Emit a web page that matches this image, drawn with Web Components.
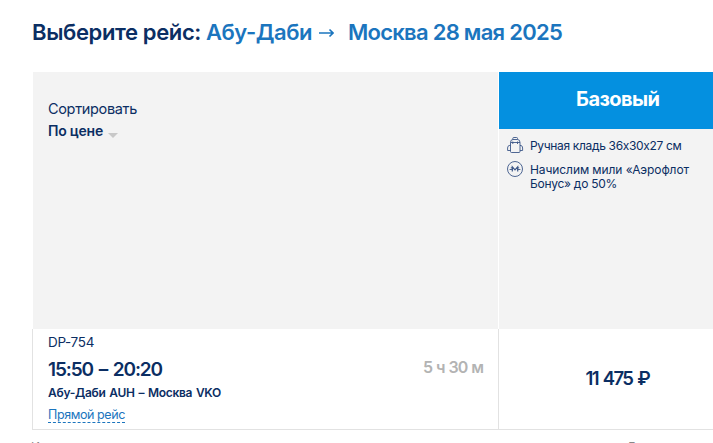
<!DOCTYPE html>
<html lang="ru">
<head>
<meta charset="utf-8">
<title>Выберите рейс</title>
<style>
html,body{margin:0;height:443px;overflow:hidden;background:#fff}
body{font-family:Inter,"Noto Sans",sans-serif;color:#0b2e63}
</style>
</head>
<body>
<flight-page></flight-page>
<script>
// A single line of text whose tracking is adjusted to fill a given width.
class FitText extends HTMLElement{
  connectedCallback(){
    const root=this.attachShadow({mode:'open'});
    root.innerHTML='<style>:host{display:block;white-space:pre;flex:none}span{display:inline-block}</style><span><slot></slot></span>';
    const span=root.querySelector('span');
    const goal=+this.getAttribute('w'), n=this.textContent.length;
    this.style.width=goal+'px';
    const now=span.getBoundingClientRect().width;
    span.style.letterSpacing=((goal-now)/n).toFixed(3)+'px';
  }
}
class FareIcon extends HTMLElement{
  connectedCallback(){
    const bag='<path d="M3.5 14.5V5.5Q3.5 2.5 6 2.5H10.5Q13 2.5 13 5.5V14.5Q13 15.5 12 15.5H4.5Q3.5 15.5 3.5 14.5ZM5.8 2.5V1.4Q5.8.5 6.8.5H9.5Q10.5.5 10.5 1.4V2.5M3.5 5.5H13M5.8 4.5V7M10.5 4.5V7M3.5 8.5H2.2Q.6 8.8.6 11V13.5H3.5M13 8.5H14Q15.6 8.8 15.6 11V13.5H13"/>';
    const miles='<circle cx="8" cy="8" r="7.5"/><path d="M5.3 10.4V5.8L8 8.8 10.7 5.8V10.4" stroke-width="1.2"/><path d="M2.6 8.5H6M3.8 6.8H5.3M10 8.5H13.4M10.7 6.8H12.2"/>';
    this.attachShadow({mode:'open'}).innerHTML=`<style>:host{display:block;width:16px;height:16px;flex:none}svg{display:block;overflow:visible}</style><svg width="16" height="16" fill="none" stroke="#3c5788" stroke-width=".9">${this.getAttribute('name')==='bag'?bag:miles}</svg>`;
  }
}
class FlightHeading extends HTMLElement{
  connectedCallback(){
    this.attachShadow({mode:'open'}).innerHTML=`<style>
:host{display:flex;height:52px;padding:20px 0 0 32px;font-size:22px;line-height:24px;font-weight:600;color:#1b75be}
.a{color:#0b2e63;margin-right:5px}svg{margin:8px 14px 0 7px;flex:none}</style>
<fit-text class="a" w="169">Выберите рейс:</fit-text><fit-text w="106">Абу-Даби</fit-text>
<svg width="15" height="10" fill="none" stroke="currentColor" stroke-width="1.6"><path d="M0 5H14M10.5 1.5 14 5 10.5 8.5"/></svg>
<fit-text w="214">Москва 28 мая 2025</fit-text>`;
  }
}
class FareHead extends HTMLElement{
  connectedCallback(){
    this.attachShadow({mode:'open'}).innerHTML=`<style>
:host{display:grid;grid-template-columns:465px 1fr;gap:1px;height:257px;margin-left:33px}
.sort{background:#f3f3f3;padding:26px 0 0 15px;font-size:14.5px;line-height:22px}
.by{display:flex;font-weight:600;font-size:14px;gap:5px}
.by i{width:0;height:0;border:5.5px solid transparent;border-top:5px solid #c8c8c8;border-bottom:0;margin-top:13px}
.fare{background:#f3f3f3}
.name{background:#0490e0;color:#fff;height:57px;box-sizing:border-box;padding:15px 0 0 77px;font-size:20px;line-height:24px;font-weight:700}
.f{display:flex;gap:7px;padding:10px 0 0 8px;font-size:12px;line-height:14px}
fare-icon{margin:-2px 0}</style>
<div class="sort"><fit-text w="89">Сортировать</fit-text><div class="by"><fit-text w="55">По цене</fit-text><i></i></div></div>
<div class="fare"><div class="name"><fit-text w="83.5">Базовый</fit-text></div>
<div class="f"><fare-icon name="bag"></fare-icon><fit-text w="151.5">Ручная кладь 36х30х27 см</fit-text></div>
<div class="f"><fare-icon name="miles"></fare-icon><div><fit-text w="159">Начислим мили «Аэрофлот</fit-text><fit-text w="87">Бонус» до 50%</fit-text></div></div></div>`;
  }
}
class FlightRow extends HTMLElement{
  connectedCallback(){
    this.attachShadow({mode:'open'}).innerHTML=`<style>
:host{display:grid;grid-template-columns:466px 1fr;height:101px;margin-left:32px;box-sizing:border-box;border:solid #e2e2e2;border-width:0 0 1px 1px}
.info{display:flex;justify-content:space-between;box-sizing:border-box;border-right:1px solid #e2e2e2;padding:5px 15px 0 15px}
.no{font-size:13.5px;line-height:16px}
.time{font-size:19px;line-height:24px;font-weight:600;margin-top:8px;word-spacing:2px}
.route{font-size:12px;line-height:16px;font-weight:600;margin-top:3px;word-spacing:1px}
.direct{font-size:12.5px;line-height:16px;height:15px;padding-top:1px;margin-top:5px;color:#1b75be;border-bottom:1px dashed}
.dur{font-size:16px;line-height:20px;font-weight:600;color:#b3b3b3;margin-top:23px;word-spacing:1px}
.price{font-size:18.5px;line-height:22px;font-weight:600;padding:38px 0 0 86.5px;word-spacing:2px}</style>
<div class="info"><div><fit-text class="no" w="46">DP-754</fit-text><fit-text class="time" w="114">15:50 – 20:20</fit-text><fit-text class="route" w="173">Абу-Даби AUH – Москва VKO</fit-text><fit-text class="direct" w="77">Прямой рейс</fit-text></div>
<fit-text class="dur" w="60">5 ч 30 м</fit-text></div>
<div class="price"><fit-text w="63.5">11 475 ₽</fit-text></div>`;
  }
}
class NextLine extends HTMLElement{
  connectedCallback(){
    this.attachShadow({mode:'open'}).innerHTML=`<style>:host{display:flex;justify-content:space-between;box-sizing:border-box;height:13px;overflow:hidden;padding:10px 77px 0 31px;font-size:12px;line-height:14px;color:#888}</style><span>И</span><span>Б</span>`;
  }
}
class FlightPage extends HTMLElement{
  connectedCallback(){
    this.attachShadow({mode:'open'}).innerHTML='<style>:host{display:block;width:713px;height:443px;overflow:hidden}</style><flight-heading></flight-heading><fare-head></fare-head><flight-row></flight-row><next-line></next-line>';
  }
}
customElements.define('fit-text',FitText);
customElements.define('fare-icon',FareIcon);
customElements.define('flight-heading',FlightHeading);
customElements.define('fare-head',FareHead);
customElements.define('flight-row',FlightRow);
customElements.define('next-line',NextLine);
customElements.define('flight-page',FlightPage);
</script>
</body>
</html>
